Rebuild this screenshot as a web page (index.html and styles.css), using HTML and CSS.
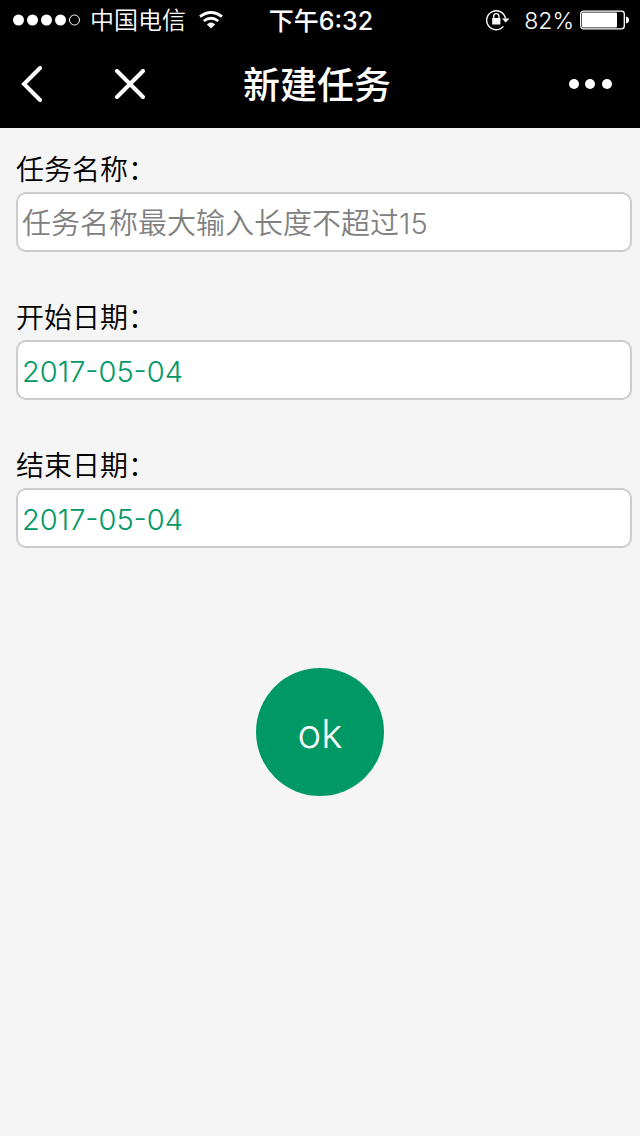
FILE: index.html
```html
<!DOCTYPE html>
<html lang="zh-CN">
<head>
<meta charset="utf-8">
<meta name="viewport" content="width=device-width, initial-scale=1">
<title>新建任务</title>
<link rel="stylesheet" href="styles.css">
</head>
<body>
<header class="top">
  <div class="status">
    <div class="status-left">
      <svg class="signal" width="68" height="12" viewBox="0 0 68 12" aria-hidden="true"><g fill="#fff"><circle cx="5.5" cy="6" r="5.5"/><circle cx="19.5" cy="6" r="5.5"/><circle cx="33.5" cy="6" r="5.5"/><circle cx="47.5" cy="6" r="5.5"/></g><circle cx="61.5" cy="6" r="5" fill="none" stroke="#fff"/></svg>
      <span class="carrier">中国电信</span>
      <svg width="24" height="18" viewBox="0 0 24 18" aria-hidden="true"><g fill="none" stroke="#fff" stroke-width="2.8"><path d="M1 5.7Q12-2.6 23 5.7"/><path d="M4.8 10Q12 4.4 19.2 10"/></g><path d="M7.9 13.4Q12 9.6 16.1 13.4L12 17.6Z" fill="#fff"/></svg>
    </div>
    <time class="clock">下午6:32</time>
    <div class="status-right">
      <svg width="24" height="22" viewBox="0 0 24 22" aria-hidden="true"><path d="M17.4 17.4A9.5 9.5 0 1 1 19.5 9.5" fill="none" stroke="#fff" stroke-width="1.4"/><path d="M16 9.5h7.5l-3.8 4z" fill="#fff"/><rect x="6.2" y="9" width="8.2" height="6.5" fill="#fff"/><path d="M7.7 9.5V7.3a2.6 2.6 0 0 1 5.2 0v2.2" fill="none" stroke="#fff" stroke-width="1.3"/></svg>
      <span class="percent">82%</span>
      <svg width="49" height="20" viewBox="0 0 49 20" aria-hidden="true"><rect x=".7" y="1.2" width="43.6" height="17.6" rx="2.8" fill="none" stroke="#fff" stroke-width="1.3"/><rect x="2" y="2.6" width="35" height="14.8" rx="1" fill="#fff"/><path d="M46 6.5q3 .5 3 3.5t-3 3.5z" fill="#fff"/></svg>
    </div>
  </div>
  <nav class="nav">
    <div class="nav-left">
      <button class="icon-button" type="button" aria-label="返回"><svg width="22" height="36" viewBox="0 0 22 36"><path d="M19 2L3 18l16 16" fill="none" stroke="#fff" stroke-width="4" stroke-linecap="round"/></svg></button>
      <button class="icon-button" type="button" aria-label="关闭"><svg width="30" height="30" viewBox="0 0 30 30"><path d="M2 2l26 26M28 2L2 28" fill="none" stroke="#fff" stroke-width="4" stroke-linecap="round"/></svg></button>
    </div>
    <h1 class="title">新建任务</h1>
    <button class="icon-button more" type="button" aria-label="更多"><svg width="44" height="10" viewBox="0 0 44 10" fill="#fff"><circle cx="5" cy="5" r="5"/><circle cx="21" cy="5" r="5"/><circle cx="38" cy="5" r="5"/></svg></button>
  </nav>
</header>
<main>
  <form class="form">
    <div class="field">
      <label class="label" for="name">任务名称：</label>
      <input class="input" id="name" type="text" maxlength="15" placeholder="任务名称最大输入长度不超过15">
    </div>
    <div class="field">
      <label class="label" for="start">开始日期：</label>
      <input class="input" id="start" type="text" value="2017-05-04">
    </div>
    <div class="field">
      <label class="label" for="end">结束日期：</label>
      <input class="input" id="end" type="text" value="2017-05-04">
    </div>
    <button class="ok" type="button">ok</button>
  </form>
</main>
</body>
</html>
```
FILE: styles.css
```css
* {
  box-sizing: border-box;
}

body {
  margin: 0;
  background: #f5f5f5;
  color: #000;
  font-family: Inter, "Noto Sans CJK SC", sans-serif;
  font-size: 28px;
  font-weight: 350;
}

button,
input {
  font: inherit;
}

svg {
  display: block;
  flex: none;
}

.top {
  background: #000;
  color: #fff;
}

.status,
.nav {
  display: grid;
  grid-template-columns: 1fr auto 1fr;
  align-items: center;
}

.status {
  height: 40px;
  padding: 0 11px 0 13px;
  font-size: 24px;
  line-height: 40px;
}

.status-left,
.status-right,
.nav-left {
  display: flex;
  align-items: center;
}

.status-left {
  gap: 13px;
}

.carrier,
.clock {
  padding-top: 2px;
  line-height: 38px;
}

.carrier {
  margin-left: -4px;
}

.status-right {
  justify-content: flex-end;
  gap: 6px;
}

.percent {
  padding: 2px 0 0 8px;
  font-size: 23px;
  line-height: 38px;
}

.clock {
  font-size: 25px;
  font-weight: 500;
}

.nav {
  height: 88px;
  padding: 0 27px 0 21px;
}

.nav-left {
  gap: 72px;
}

.title {
  margin: 0;
  padding-top: 4px;
  font-size: 37px;
  font-weight: 500;
  line-height: 48px;
}

.icon-button {
  padding: 0;
  border: 0;
  background: none;
}

.more {
  justify-self: end;
}

.form {
  display: flex;
  flex-direction: column;
  gap: 44px;
  padding: 22px 8px 20px 16px;
}

.field {
  display: flex;
  flex-direction: column;
  gap: 2px;
}

.field + .field {
  padding-top: 2px;
}

.label {
  line-height: 40px;
}

.input {
  width: 100%;
  height: 60px;
  padding: 2px 4px 0;
  border: 2px solid #ccc;
  border-radius: 10px;
  background: #fff;
  color: #009966;
  font-size: 29px;
}

.input::placeholder {
  color: #808080;
  opacity: 1;
}

.ok {
  width: 128px;
  height: 128px;
  margin: 76px 8px 0 0;
  padding: 2px 0 0;
  align-self: center;
  border: 0;
  border-radius: 50%;
  background: #009966;
  color: #fff;
  font-size: 40px;
}
```
